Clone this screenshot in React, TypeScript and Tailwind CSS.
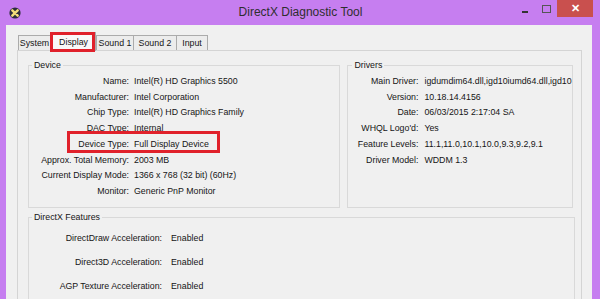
// DirectX Diagnostic Tool – Display tab
const deviceRows: [string, string][] = [
  ["Name:", "Intel(R) HD Graphics 5500"],
  ["Manufacturer:", "Intel Corporation"],
  ["Chip Type:", "Intel(R) HD Graphics Family"],
  ["DAC Type:", "Internal"],
  ["Device Type:", "Full Display Device"],
  ["Approx. Total Memory:", "2003 MB"],
  ["Current Display Mode:", "1366 x 768 (32 bit) (60Hz)"],
  ["Monitor:", "Generic PnP Monitor"],
];

const driverRows: [string, string][] = [
  ["Main Driver:", "igdumdim64.dll,igd10iumd64.dll,igd10"],
  ["Version:", "10.18.14.4156"],
  ["Date:", "06/03/2015 2:17:04 SA"],
  ["WHQL Logo'd:", "Yes"],
  ["Feature Levels:", "11.1,11.0,10.1,10.0,9.3,9.2,9.1"],
  ["Driver Model:", "WDDM 1.3"],
];

const featureRows: [string, string][] = [
  ["DirectDraw Acceleration:", "Enabled"],
  ["Direct3D Acceleration:", "Enabled"],
  ["AGP Texture Acceleration:", "Enabled"],
];

function DxIcon() {
  return (
    <svg width="12" height="12" viewBox="0 0 12 12">
      <circle cx="6" cy="6" r="5.6" fill="#2c2c3c" />
      <path d="M3.3 3.3 L8.7 8.7 M8.7 3.3 L3.3 8.7" stroke="#f2de7a" strokeWidth="2.4" strokeLinecap="round" />
    </svg>
  );
}

function GroupLabel({ text, indent }: { text: string; indent: string }) {
  return (
    <div className={`-mt-[6px] ${indent} px-[2px] w-fit bg-[#f0f0f0] leading-[11px]`}>
      {text}
    </div>
  );
}

export default function App() {
  return (
    <div className="relative w-[600px] h-[299px] overflow-hidden bg-[#c67ef0] flex flex-col font-['Liberation_Sans',Arial,sans-serif] text-[8.8px] text-[#151515]">
      {/* title bar */}
      <div className="h-[25px] shrink-0 grid grid-cols-[1fr_auto_1fr]">
        <div className="pl-[9px] pt-[7px]">
          <DxIcon />
        </div>
        <div className="text-[12px] leading-[25px] text-[#2e2e2e] pl-[1px]">DirectX Diagnostic Tool</div>
        <div className="flex justify-end items-start pr-[7px]">
          <div className="w-[6px] h-[2px] bg-[#333] mt-[11px] mr-[14px]" />
          <div className="w-[9px] h-[8px] border border-[#555] mt-[5px] mr-[6px]" />
          <div className="w-[36px] h-[17px] bg-[#c9504e] flex items-center justify-center text-white text-[11px] font-bold leading-none">
            ✕
          </div>
        </div>
      </div>

      {/* client area */}
      <div className="flex-1 ml-[6px] mr-[8px] bg-[#f0f0f0] pt-[7px] pl-[11px] pr-[10px] flex flex-col">
        {/* tabs */}
        <div className="h-[18px] flex items-end pl-[1px] relative z-10">
          <div className="w-[33px] h-[15px] border border-b-0 border-[#ababab] bg-[#ececec] text-center leading-[14px]">System</div>
          <div className="w-[45px] h-[19px] -mb-px border border-b-0 border-[#ababab] bg-[#f9f9f9] text-center leading-[18px]">Display</div>
          <div className="w-[38px] h-[15px] border border-b-0 border-[#ababab] bg-[#ececec] text-center leading-[14px]">Sound 1</div>
          <div className="w-[43px] h-[15px] border border-b-0 border-l-0 border-[#ababab] bg-[#ececec] text-center leading-[14px]">Sound 2</div>
          <div className="w-[31px] h-[15px] border border-b-0 border-l-0 border-[#ababab] bg-[#ececec] text-center leading-[14px]">Input</div>
        </div>

        {/* tab panel */}
        <div className="flex-1 border border-[#d4d4d4] bg-[#f0f0f0] pl-[10px] pr-[8px] pt-[14px]">
          <div className="flex gap-[7px]">
            {/* Device */}
            <div className="w-[313px] h-[143px] border border-[#d9d9d9]">
              <GroupLabel text="Device" indent="ml-[3px]" />
              <div className="grid grid-cols-[100px_1fr] gap-x-[5px] pt-[3px] leading-[15.7px]">
                {deviceRows.map(([k, v]) => (
                  <div key={k} className="contents">
                    <div className="text-right whitespace-nowrap">{k}</div>
                    <div className="whitespace-nowrap">{v}</div>
                  </div>
                ))}
              </div>
            </div>

            {/* Drivers */}
            <div className="w-[226px] h-[143px] border border-[#d9d9d9]">
              <GroupLabel text="Drivers" indent="ml-[4px]" />
              <div className="grid grid-cols-[70px_1fr] gap-x-[6px] pt-[3px] leading-[15.7px]">
                {driverRows.map(([k, v]) => (
                  <div key={k} className="contents">
                    <div className="text-right whitespace-nowrap">{k}</div>
                    <div className="whitespace-nowrap overflow-hidden">{v}</div>
                  </div>
                ))}
              </div>
            </div>
          </div>

          {/* DirectX Features */}
          <div className="mt-[9px] w-[547px] h-[100px] border border-[#d9d9d9]">
            <GroupLabel text="DirectX Features" indent="ml-[3px]" />
            <div className="grid grid-cols-[133px_1fr] gap-x-[9px] pt-[3px] leading-[24px]">
              {featureRows.map(([k, v]) => (
                <div key={k} className="contents">
                  <div className="text-right whitespace-nowrap">{k}</div>
                  <div>{v}</div>
                </div>
              ))}
            </div>
          </div>
        </div>
      </div>

      {/* red annotation boxes */}
      <div className="absolute left-[50px] top-[32px] w-[45px] h-[20px] border-[3px] border-[#e0212b] z-20" />
      <div className="absolute left-[67px] top-[131px] w-[153px] h-[22px] border-[3px] border-[#e0212b] z-20" />
    </div>
  );
}
